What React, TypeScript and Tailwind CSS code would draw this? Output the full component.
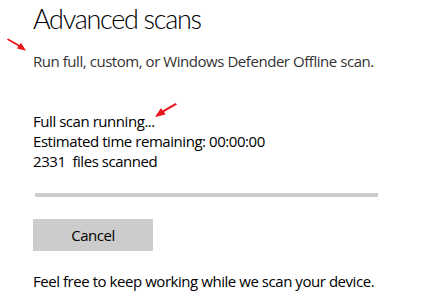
import React from 'react';

const RedArrow: React.FC<{ className: string; flip?: boolean }> = ({ className, flip }) => (
  <svg
    className={className}
    viewBox="0 0 24 16"
    style={flip ? { transform: 'scaleX(-1)' } : undefined}
  >
    <path d="M1 2 L14 9.5 L12.5 12 L23 14.5 L17 5.5 L15.5 8 L2.5 0.5 Z" fill="#e8141c" />
  </svg>
);

export default function App() {
  return (
    <div className="relative min-h-[308px] w-[421px] bg-white pl-[33px] pt-[2px] font-['Open_Sans',sans-serif] text-[15px] leading-5 tracking-[-0.45px]">
      <h1 className="font-['Lato',sans-serif] text-[27px] font-light leading-[34px] tracking-[-1.3px] text-black">
        Advanced scans
      </h1>
      <p className="mt-[15px] text-[#333333]">Run full, custom, or Windows Defender Offline scan.</p>

      <div className="mt-10 text-black">
        <p>Full scan running...</p>
        <p>Estimated time remaining: 00:00:00</p>
        <p>2331&nbsp; files scanned</p>
      </div>

      <div className="ml-[2px] mt-[22px] h-1 w-[343px] bg-[#cccccc]" />

      <button className="mt-[22px] flex h-8 w-[120px] items-center justify-center bg-[#cccccc] text-black">
        Cancel
      </button>

      <p className="mt-5 text-black">Feel free to keep working while we scan your device.</p>

      <RedArrow className="absolute left-[6px] top-[38px] h-[14px] w-[21px]" />
      <RedArrow className="absolute left-[154px] top-[102px] h-[17px] w-[24px]" flip />
    </div>
  );
}
